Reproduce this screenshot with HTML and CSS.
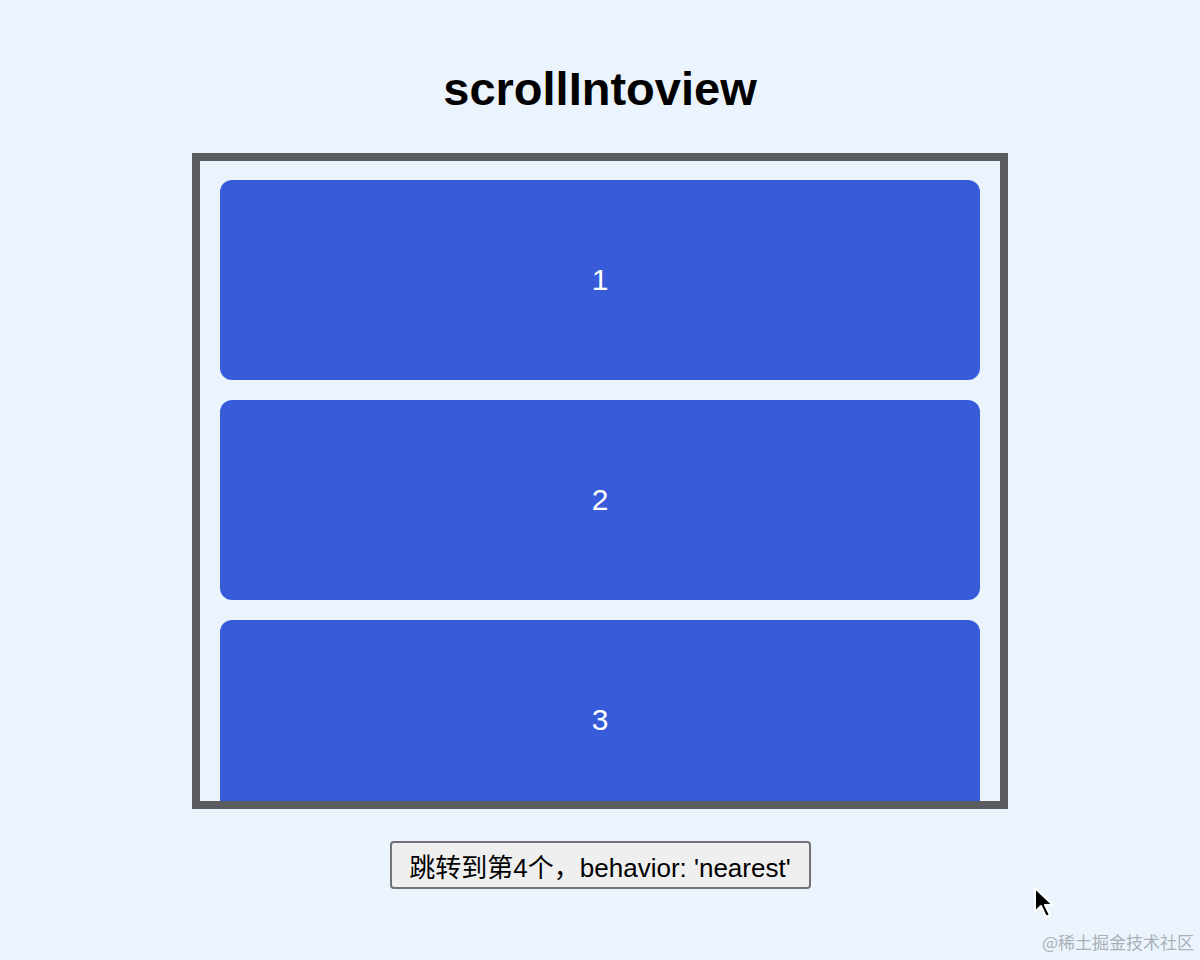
FILE: index.html
```html
<!DOCTYPE html>
<html lang="zh">
<head>
<meta charset="utf-8">
<link rel="stylesheet" href="styles.css">
</head>
<body>
<div class="page">
  <h1 class="title">scrollIntoview</h1>
  <div class="scroller">
    <div class="item">1</div>
    <div class="item">2</div>
    <div class="item">3</div>
    <div class="item">4</div>
    <div class="item">5</div>
  </div>
  <button class="btn">跳转到第4个，behavior: 'nearest'</button>
</div>
<svg class="cursor" width="22" height="34" viewBox="0 0 22 34">
  <path d="M2 2 L2 26 L8 20 L13 31 L17 29 L12 19 L20 19 Z" fill="#000" stroke="#fff" stroke-width="2" stroke-linejoin="round"/>
</svg>
<div class="watermark">@稀土掘金技术社区</div>
</body>
</html>
```
FILE: styles.css
```css
html, body {
  margin: 0;
  padding: 0;
}
body {
  background: #ebf4fc;
  width: 1200px;
  height: 960px;
  overflow: hidden;
  position: relative;
  font-family: "Liberation Sans", "Noto Sans CJK SC", sans-serif;
}
.page {
  display: flex;
  flex-direction: column;
  align-items: center;
  padding-top: 62px;
}
.title {
  margin: 0 0 38px;
  font-size: 47px;
  line-height: 53px;
  font-weight: bold;
  color: #000;
}
.scroller {
  box-sizing: border-box;
  width: 816px;
  height: 656px;
  border: 8px solid #595b5f;
  padding: 19px 20px 20px;
  overflow: hidden;
  display: flex;
  flex-direction: column;
  gap: 20px;
}
.item {
  flex: 0 0 200px;
  height: 200px;
  background: #385bd9;
  border-radius: 12px;
  color: #fff;
  font-size: 30px;
  display: flex;
  align-items: center;
  justify-content: center;
}
.btn {
  margin-top: 32px;
  width: 421px;
  height: 48px;
  box-sizing: border-box;
  border: 2px solid #707276;
  border-radius: 4px;
  background: #efefef;
  font-family: "Liberation Sans", "Noto Sans CJK SC", sans-serif;
  font-size: 26px;
  color: #000;
  padding: 0 6px;
  white-space: nowrap;
}
.cursor {
  position: absolute;
  left: 1033px;
  top: 886px;
}
.watermark {
  position: absolute;
  right: 6px;
  bottom: 8px;
  font-family: "Noto Sans CJK SC", sans-serif;
  font-size: 17px;
  line-height: 20px;
  color: #a9b0b8;
}
```
